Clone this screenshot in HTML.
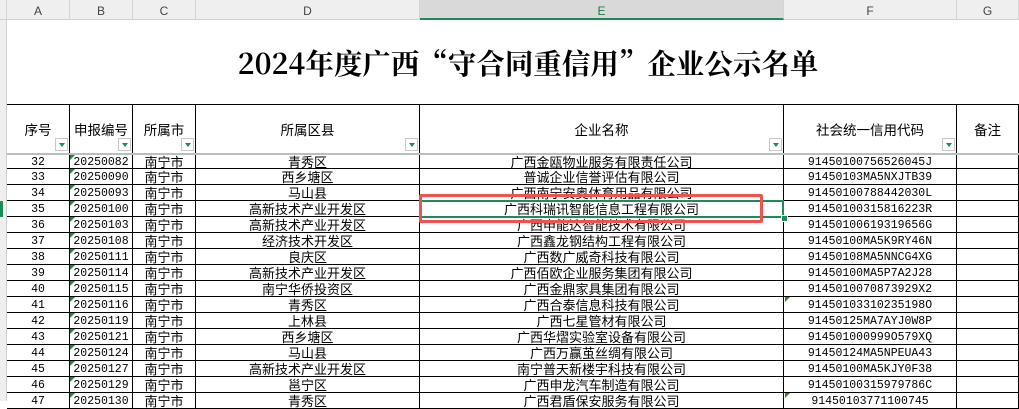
<!DOCTYPE html>
<html><head><meta charset="utf-8"><style>
body{margin:0;width:1019px;height:401px;overflow:hidden;background:#fff;position:relative;font-family:"Liberation Sans","Noto Sans CJK SC",sans-serif;}
.ch{position:absolute;top:0;height:20px;background:#efefef;border-right:1px solid #d4d4d4;border-bottom:1px solid #d0d0d0;box-sizing:border-box;font-size:12px;color:#444;text-align:center;line-height:22px}
.abs{position:absolute}
.c{position:absolute;box-sizing:border-box;text-align:center;font-size:13px;color:#000;white-space:nowrap;overflow:hidden}
.m{font-family:"Liberation Mono",monospace;font-size:11.5px!important}
.f{position:absolute;width:13px;height:13px;border:1px solid #c8c8c8;background:#fff;box-sizing:border-box}
.f:after{content:"";position:absolute;left:3px;top:4px;border-left:3px solid transparent;border-right:3px solid transparent;border-top:4px solid #1d8a5b}
.tri{position:absolute;width:0;height:0;border-top:5px solid #1d8a3b;border-right:5px solid transparent}
</style></head><body>
<div class="ch" style="left:0;width:7px"></div>
<div class="ch" style="left:7px;width:63px">A</div>
<div class="ch" style="left:70px;width:63px">B</div>
<div class="ch" style="left:133px;width:63px">C</div>
<div class="ch" style="left:196px;width:224px">D</div>
<div class="ch" style="left:420px;width:364px;background:#d9d9d9;border-bottom:2px solid #1e8c5a;color:#1e7a4e">E</div>
<div class="ch" style="left:784px;width:173px">F</div>
<div class="ch" style="left:957px;width:62px">G</div>
<div class="abs" style="left:0;top:20px;width:7px;height:381px;background:#efefef;border-right:1px solid #d0d0d0;box-sizing:border-box"></div>
<div class="abs" style="left:0;top:201px;width:3px;height:16px;background:#1e8c5a"></div>
<div class="abs" style="left:22px;top:20px;width:1012px;height:84px;text-align:center;font-family:'Noto Serif CJK SC',serif;font-weight:bold;font-size:28.5px;line-height:86px;color:#000">2024年度广西“守合同重信用”企业公示名单</div>
<div class="abs" style="left:7px;top:104px;width:1012px;height:1px;background:#000"></div>
<div class="abs" style="left:7px;top:153px;width:1012px;height:2px;background:#bdbdbd"></div>
<div id="h"></div>
<script>
const cols=[7,70,133,196,420,784,957,1019];
const hdr=["序号","申报编号","所属市","所属区县","企业名称","社会统一信用代码","备注"];
let s="";
for(let i=0;i<7;i++){
 s+=`<div class="c" style="left:${cols[i]}px;top:104px;width:${cols[i+1]-cols[i]}px;height:49px;line-height:53px;border-right:1px solid #000;font-size:13.5px">${hdr[i]}</div>`;
 if(i<6) s+=`<div class="f" style="left:${cols[i+1]-15}px;top:138px"></div>`;
}
const d=[
["32","20250082","青秀区","广西金瓯物业服务有限责任公司","91450100756526045J"],
["33","20250090","西乡塘区","普诚企业信誉评估有限公司","91450103MA5NXJTB39"],
["34","20250093","马山县","广西南宁安奥体育用品有限公司","91450100788442030L"],
["35","20250100","高新技术产业开发区","广西科瑞讯智能信息工程有限公司","91450100315816223R"],
["36","20250103","高新技术产业开发区","广西申能达智能技术有限公司","91450100619319656G"],
["37","20250108","经济技术开发区","广西鑫龙钢结构工程有限公司","91450100MA5K9RY46N"],
["38","20250111","良庆区","广西数广威奇科技有限公司","91450108MA5NNCG4XG"],
["39","20250114","高新技术产业开发区","广西佰欧企业服务集团有限公司","91450100MA5P7A2J28"],
["40","20250115","南宁华侨投资区","广西金鼎家具集团有限公司","9145010070873929X2"],
["41","20250116","青秀区","广西合泰信息科技有限公司","91450103310235198O"],
["42","20250119","上林县","广西七星管材有限公司","91450125MA7AYJ0W8P"],
["43","20250121","西乡塘区","广西华熠实验室设备有限公司","914501000999O579XQ"],
["44","20250124","马山县","广西万赢茧丝绸有限公司","91450124MA5NPEUA43"],
["45","20250127","高新技术产业开发区","南宁普天新楼宇科技有限公司","91450100MA5KJY0F38"],
["46","20250129","邕宁区","广西申龙汽车制造有限公司","91450100315979786C"],
["47","20250130","青秀区","广西君盾保安服务有限公司","91450103771100745"]];
d.forEach((r,k)=>{
 const top=k==0?155:153+k*16;
 const h=k==0?14:16;
 const v=[r[0],r[1],"南宁市",r[2],r[3],r[4],""];
 for(let i=0;i<7;i++){
  const m=(i<2||i==5)?" m":"";
  s+=`<div class="c${m}" style="left:${cols[i]}px;top:${top}px;width:${cols[i+1]-cols[i]}px;height:${h}px;line-height:${h+2}px;border-right:1px solid #000;border-bottom:1px solid #000;font-size:13px">${v[i]}</div>`;
 }
 s+=`<div class="tri" style="left:70px;top:${top}px"></div>`;
});
s+=`<div class="tri" style="left:785px;top:297px"></div><div class="tri" style="left:785px;top:393px"></div>`;
document.getElementById("h").outerHTML=s;
</script>
<div class="abs" style="left:420px;top:200px;width:364px;height:18px;border:2px solid #1e8c5a;box-sizing:border-box"></div>
<div class="abs" style="left:781px;top:215px;width:5px;height:5px;background:#1e8c5a;border:1px solid #fff"></div>
<div class="abs" style="left:419px;top:194px;width:344px;height:29px;border:3px solid #ef5350;box-sizing:border-box;border-radius:2px"></div>
</body></html>
